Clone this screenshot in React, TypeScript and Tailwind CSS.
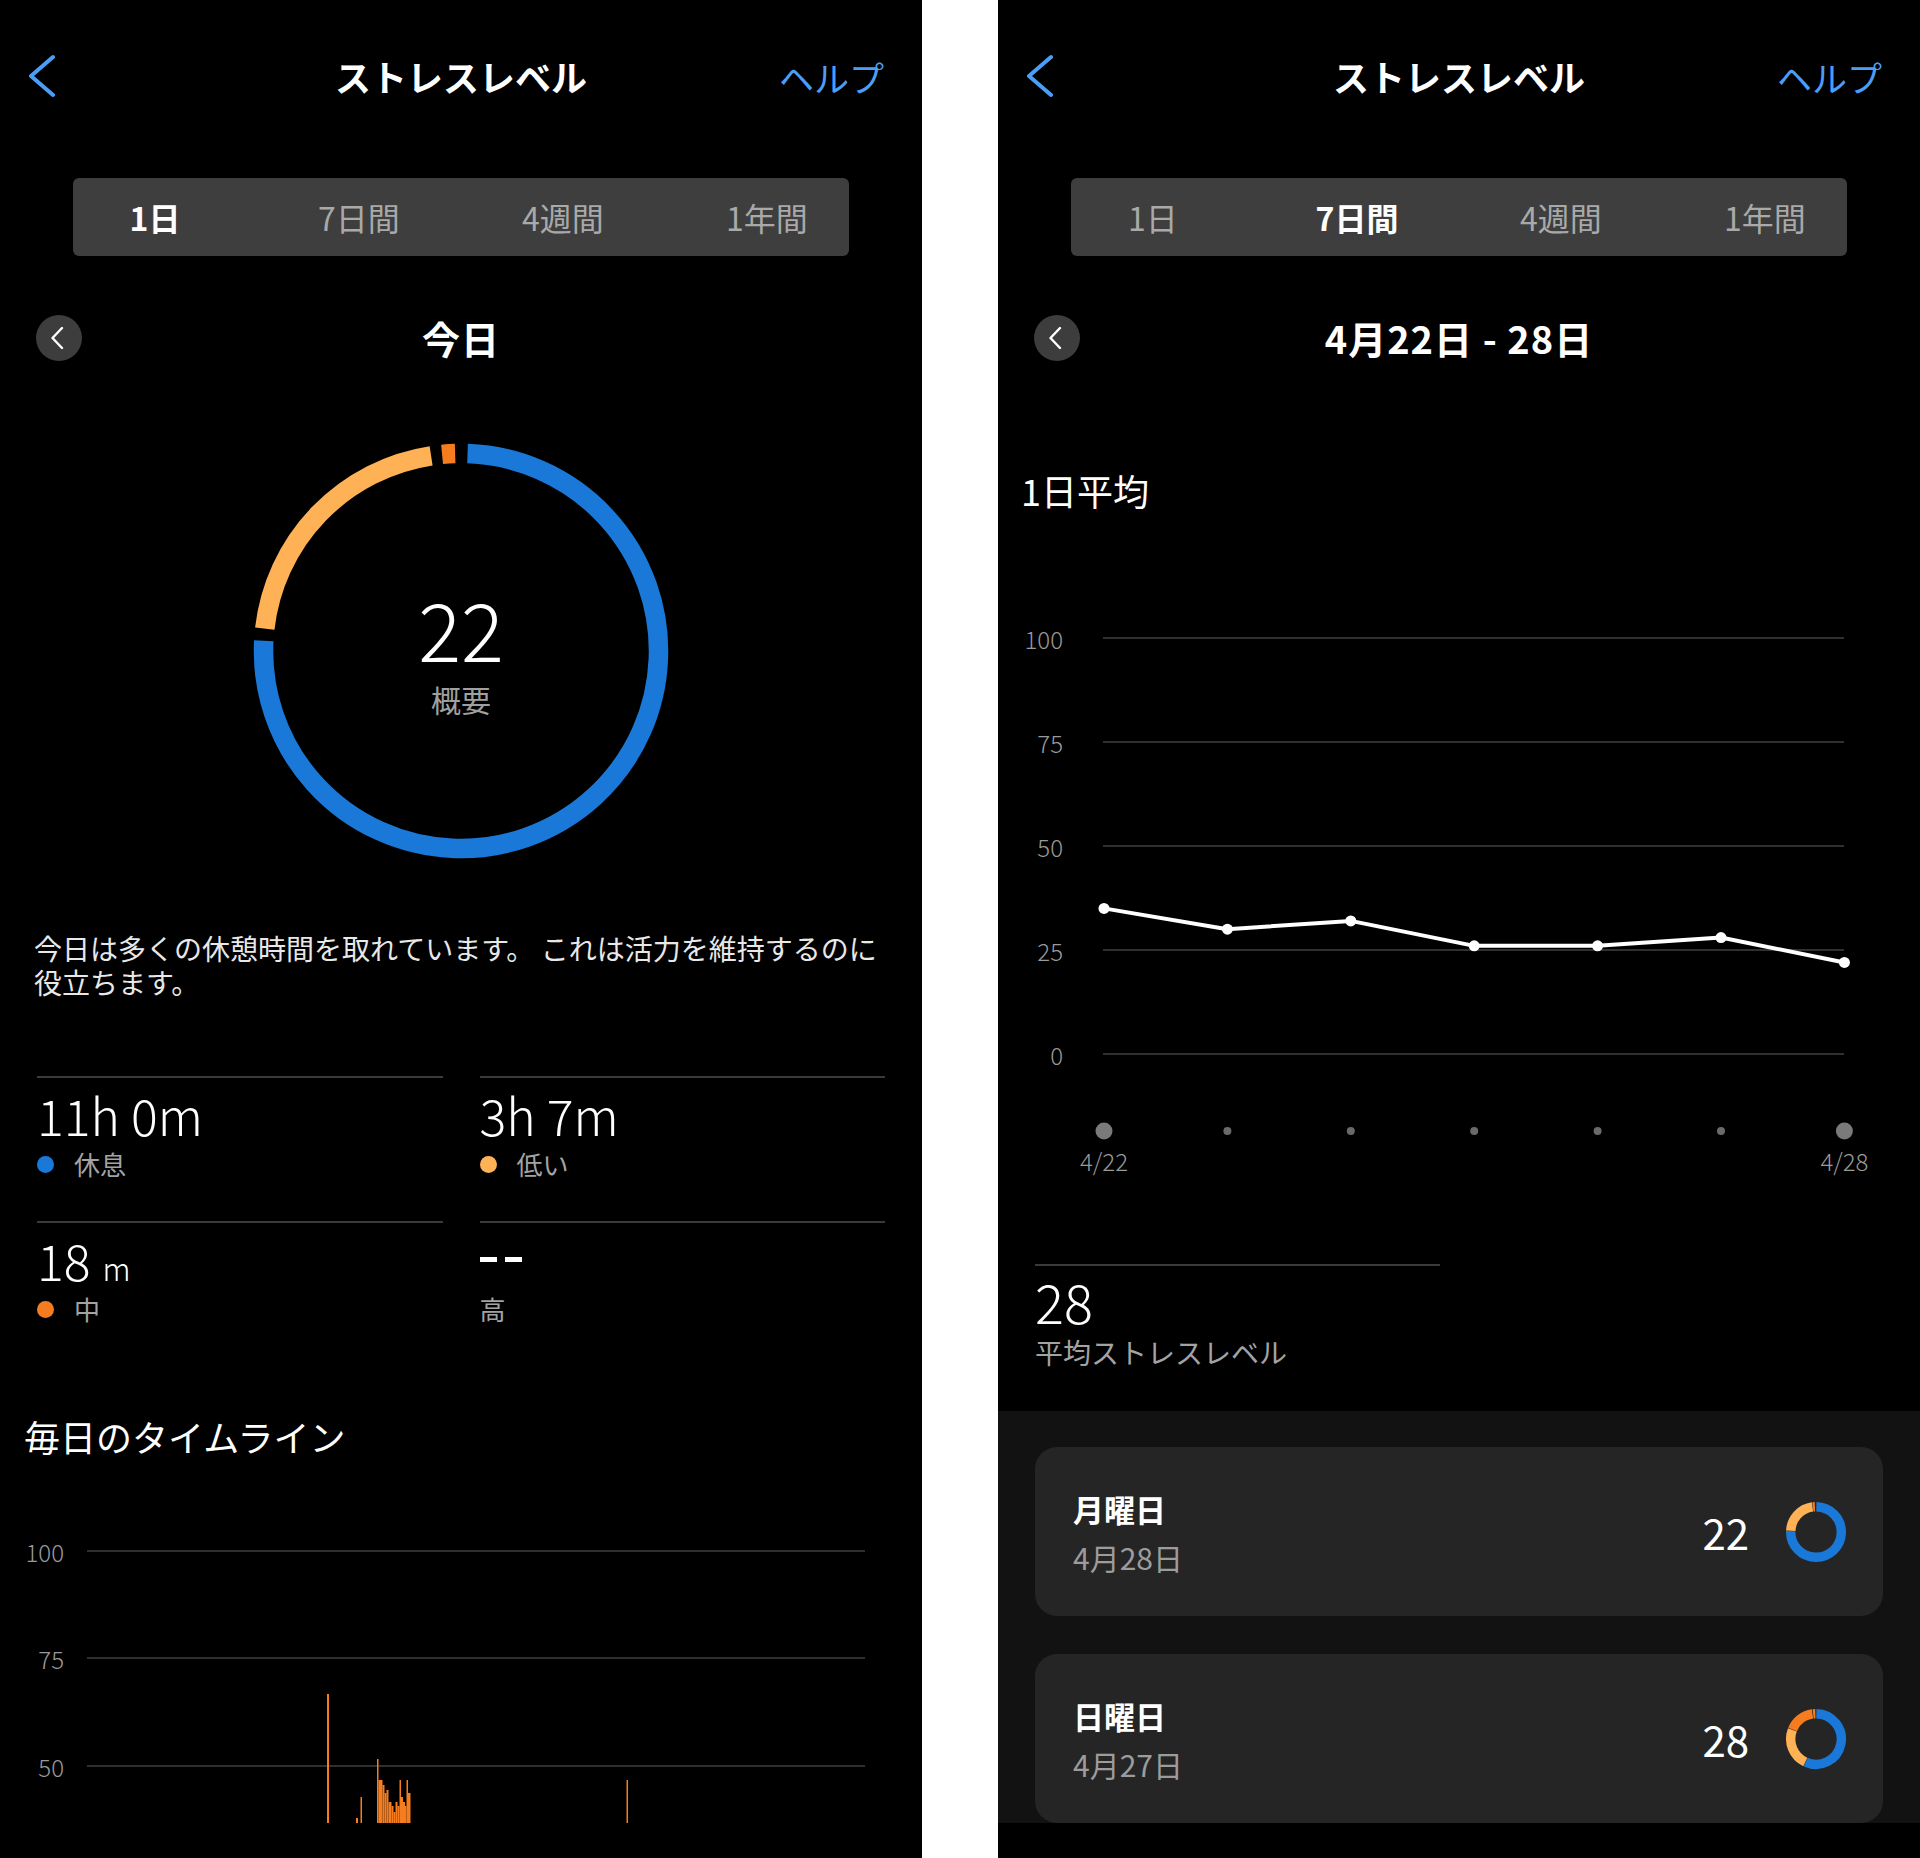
import React from 'react';

const FONT = "font-['Noto_Sans_CJK_JP','Noto_Sans',sans-serif]";

const BLUE = '#1a78d8';
const LIGHT = '#ffb155';
const DARK = '#f57c1f';

type Seg = [string, number, number];

// angles in degrees, clockwise from 12 o'clock
function arc(cx: number, cy: number, r: number, a0: number, a1: number) {
  const p = (a: number) => {
    const t = ((a - 90) * Math.PI) / 180;
    return [cx + r * Math.cos(t), cy + r * Math.sin(t)];
  };
  const [x0, y0] = p(a0);
  const [x1, y1] = p(a1);
  const large = a1 - a0 > 180 ? 1 : 0;
  return `M${x0} ${y0} A${r} ${r} 0 ${large} 1 ${x1} ${y1}`;
}

function Ring({ size, r, stroke, segs }: { size: number; r: number; stroke: number; segs: Seg[] }) {
  const c = size / 2;
  return (
    <svg width={size} height={size} viewBox={`0 0 ${size} ${size}`} className="block">
      {segs.map(([color, a0, a1], i) => (
        <path key={i} d={arc(c, c, r, a0, a1)} stroke={color} strokeWidth={stroke} fill="none" />
      ))}
    </svg>
  );
}

function Header() {
  return (
    <div className="grid h-[152px] grid-cols-[1fr_auto_1fr] items-center">
      <div className="pl-[29px]">
        <svg width="26" height="44" viewBox="0 0 26 44" className="block">
          <path d="M24 3 L2 22 L24 41" stroke="#4b9ef7" strokeWidth="4" fill="none" strokeLinecap="round" strokeLinejoin="round" />
        </svg>
      </div>
      <div className="text-[36px] font-bold leading-none text-white">ストレスレベル</div>
      <div className="justify-self-end pr-[38px] text-[35px] leading-none text-[#4b9ef7]">ヘルプ</div>
    </div>
  );
}

function Tabs({ active }: { active: number }) {
  const tabs = ['1日', '7日間', '4週間', '1年間'];
  return (
    <div className="mx-[73px] mt-[26px] h-[78px] rounded-[6px] bg-[#3e3e3e]">
      <div className="-mx-[20px] grid h-full grid-cols-4 items-center text-center text-[32px] leading-none">
        {tabs.map((t, i) => (
          <div key={t} className={i === active ? 'font-bold text-white' : 'text-[#a9a9a9]'}>
            {t}
          </div>
        ))}
      </div>
    </div>
  );
}

function DateNav({ label }: { label: string }) {
  return (
    <div className="mt-[59px] grid h-[46px] grid-cols-[1fr_auto_1fr] items-center">
      <div className="pl-[36px]">
        <div className="flex h-[46px] w-[46px] items-center justify-center rounded-full bg-[#3d3d3d]">
          <svg width="16" height="24" viewBox="0 0 16 24" className="block">
            <path d="M11 2 L1.5 12 L11 22" stroke="#fff" strokeWidth="2.4" fill="none" strokeLinecap="round" strokeLinejoin="round" />
          </svg>
        </div>
      </div>
      <div className="whitespace-nowrap text-[38px] font-bold leading-none tracking-[1px] text-white">{label}</div>
      <div />
    </div>
  );
}

function Stat({ value, unit, label, dot }: { value: string; unit?: string; label: string; dot?: string }) {
  return (
    <div className="h-[145px] border-t-2 border-[#3a3a3a] pt-[8px]">
      <div className="h-[56px] whitespace-nowrap text-[50px] font-light leading-[56px] text-white">
        {value}
        {unit && <span className="ml-[12px] text-[31px]">{unit}</span>}
      </div>
      <div className="mt-[4px] flex h-[36px] items-center gap-[20px] text-[26px] leading-none text-[#a3a3a3]">
        {dot && <span className="h-[17px] w-[17px] rounded-full" style={{ backgroundColor: dot }} />}
        <span>{label}</span>
      </div>
    </div>
  );
}

// [x, width, top] in panel pixels
const BARS: [number, number, number][] = [
  [327, 2, 1694], [356, 2, 1818], [360.5, 1.5, 1797], [377, 1.5, 1759], [378.5, 4, 1780],
  [382.5, 2, 1785], [384.5, 2, 1793], [386.5, 2, 1790], [388.5, 3, 1802], [391.5, 2, 1806],
  [393.5, 2, 1812], [395.5, 2, 1802], [397.5, 2, 1806], [399.5, 1.5, 1780], [401, 2, 1797],
  [403, 2, 1802], [405, 1.5, 1806], [406.5, 1.5, 1780], [408, 2.5, 1793], [626.5, 1.5, 1780],
];

function TimelineChart() {
  const top = 1461;
  const lines = [
    ['100', 1551],
    ['75', 1658],
    ['50', 1766],
  ] as const;
  return (
    <svg width="922" height="362" viewBox="0 0 922 362" className="block">
      {lines.map(([l, y]) => (
        <g key={l}>
          <line x1="87" x2="865" y1={y - top} y2={y - top} stroke="#2f2f2f" strokeWidth="2" />
          <text x="64" y={y - top} textAnchor="end" dominantBaseline="central" fontSize="24" fill="#9a9a9a" fontWeight="300">
            {l}
          </text>
        </g>
      ))}
      {BARS.map(([x, w, t], i) => (
        <rect key={i} x={x} width={w} y={t - top} height={1823 - t} fill={DARK} />
      ))}
    </svg>
  );
}

function DayPanel() {
  return (
    <div className="flex h-[1823px] flex-col overflow-hidden bg-black">
      <Header />
      <Tabs active={0} />
      <DateNav label="今日" />
      <div className="relative mx-auto mt-[80px] h-[420px] w-[420px]">
        <Ring
          size={420}
          r={197.5}
          stroke={19.5}
          segs={[
            [BLUE, 1.9, 273],
            [LIGHT, 276.5, 351.3],
            [DARK, 354.5, 358.3],
          ]}
        />
        <div className="absolute inset-0 flex flex-col items-center pt-[146px]">
          <div className="h-[80px] text-[80px] font-light leading-[80px] text-white">22</div>
          <div className="mt-[14px] h-[36px] text-[30px] leading-[36px] text-[#a0a0a0]">概要</div>
        </div>
      </div>
      <div className="mt-[70px] whitespace-nowrap px-[34px] text-[28px] leading-[34px] text-[#e8e8e8]">
        今日は多くの休憩時間を取れています。 これは活力を維持するのに
        <br />
        役立ちます。
      </div>
      <div className="mt-[77px] grid grid-cols-2 gap-x-[37px] px-[37px]">
        <Stat value="11h 0m" label="休息" dot={BLUE} />
        <Stat value="3h 7m" label="低い" dot={LIGHT} />
        <Stat value="18" unit="m" label="中" dot={DARK} />
        <div className="h-[145px] border-t-2 border-[#3a3a3a] pt-[8px]">
          <div className="flex h-[56px] items-center gap-[8px]">
            <span className="h-[5px] w-[17px] bg-white" />
            <span className="h-[5px] w-[17px] bg-white" />
          </div>
          <div className="mt-[4px] flex h-[36px] items-center text-[26px] leading-none text-[#a3a3a3]">高</div>
        </div>
      </div>
      <div className="mt-[45px] h-[50px] pl-[24px] text-[36px] leading-[50px] text-white">毎日のタイムライン</div>
      <TimelineChart />
    </div>
  );
}

const AVG = [35, 30, 32, 26, 26, 28, 22];

function WeekChart() {
  const top = 515;
  const ys = [
    ['100', 638],
    ['75', 742],
    ['50', 846],
    ['25', 950],
    ['0', 1054],
  ] as const;
  const px = (i: number) => 106 + i * 123.4;
  const py = (v: number) => 1054 - top - v * 4.16;
  const pts = AVG.map((v, i) => `${px(i)},${py(v)}`).join(' ');
  return (
    <svg width="922" height="670" viewBox="0 0 922 670" className="block">
      {ys.map(([l, y]) => (
        <g key={l}>
          <line x1="105" x2="846" y1={y - top} y2={y - top} stroke="#303030" strokeWidth="2" />
          <text x="65" y={y - top} textAnchor="end" dominantBaseline="central" fontSize="24" fill="#9a9a9a" fontWeight="300">
            {l}
          </text>
        </g>
      ))}
      <polyline points={pts} fill="none" stroke="#fff" strokeWidth="4" strokeLinejoin="round" />
      {AVG.map((v, i) => (
        <circle key={i} cx={px(i)} cy={py(v)} r="5.5" fill="#fff" />
      ))}
      {AVG.map((_, i) => (
        <circle
          key={'d' + i}
          cx={px(i)}
          cy={1131 - top}
          r={i === 0 || i === 6 ? 8.5 : 4}
          fill={i === 0 || i === 6 ? '#7a7a7a' : '#6a6a6a'}
        />
      ))}
      <text x={px(0)} y={1160 - top} textAnchor="middle" dominantBaseline="central" fontSize="24" fill="#9a9a9a" fontWeight="300">
        4/22
      </text>
      <text x={px(6)} y={1160 - top} textAnchor="middle" dominantBaseline="central" fontSize="24" fill="#9a9a9a" fontWeight="300">
        4/28
      </text>
    </svg>
  );
}

function DayCard({ day, date, value, segs }: { day: string; date: string; value: string; segs: Seg[] }) {
  return (
    <div className="flex h-[169px] shrink-0 items-center justify-between rounded-[22px] bg-[#252525] pl-[38px] pr-[36px]">
      <div>
        <div className="h-[40px] text-[31px] font-bold leading-[40px] text-white">{day}</div>
        <div className="mt-[10px] h-[36px] text-[30px] leading-[36px] text-[#9c9c9c]">{date}</div>
      </div>
      <div className="flex items-center gap-[36px]">
        <div className="text-[42px] leading-none text-white">{value}</div>
        <Ring size={62} r={25.3} stroke={9.4} segs={segs} />
      </div>
    </div>
  );
}

function WeekPanel() {
  return (
    <div className="flex h-[1823px] flex-col overflow-hidden bg-black">
      <Header />
      <Tabs active={1} />
      <DateNav label="4月22日 - 28日" />
      <div className="mt-[104px] h-[50px] pl-[23px] text-[36px] leading-[50px] text-white">1日平均</div>
      <WeekChart />
      <div className="ml-[37px] mt-[79px] w-[405px] border-t-2 border-[#3a3a3a] pt-[7px]">
        <div className="h-[56px] text-[54px] font-light leading-[56px] text-white">28</div>
        <div className="mt-[5px] h-[36px] text-[28px] leading-[36px] text-[#a3a3a3]">平均ストレスレベル</div>
      </div>
      <div className="mt-[41px] flex flex-1 flex-col gap-[38px] bg-[#121212] px-[37px] pt-[36px]">
        <DayCard
          day="月曜日"
          date="4月28日"
          value="22"
          segs={[
            [BLUE, 0.8, 272],
            [LIGHT, 273, 352],
            [DARK, 353, 357.5],
          ]}
        />
        <DayCard
          day="日曜日"
          date="4月27日"
          value="28"
          segs={[
            [BLUE, 0.8, 204],
            [LIGHT, 205, 291],
            [DARK, 292, 352],
            [DARK, 353.5, 358.5],
          ]}
        />
      </div>
    </div>
  );
}

export default function App() {
  return (
    <div className={`flex h-[1858px] w-[1920px] bg-black ${FONT}`}>
      <div className="h-full w-[922px] bg-black">
        <DayPanel />
      </div>
      <div className="h-full w-[76px] bg-white" />
      <div className="h-full w-[922px] bg-black">
        <WeekPanel />
      </div>
    </div>
  );
}
